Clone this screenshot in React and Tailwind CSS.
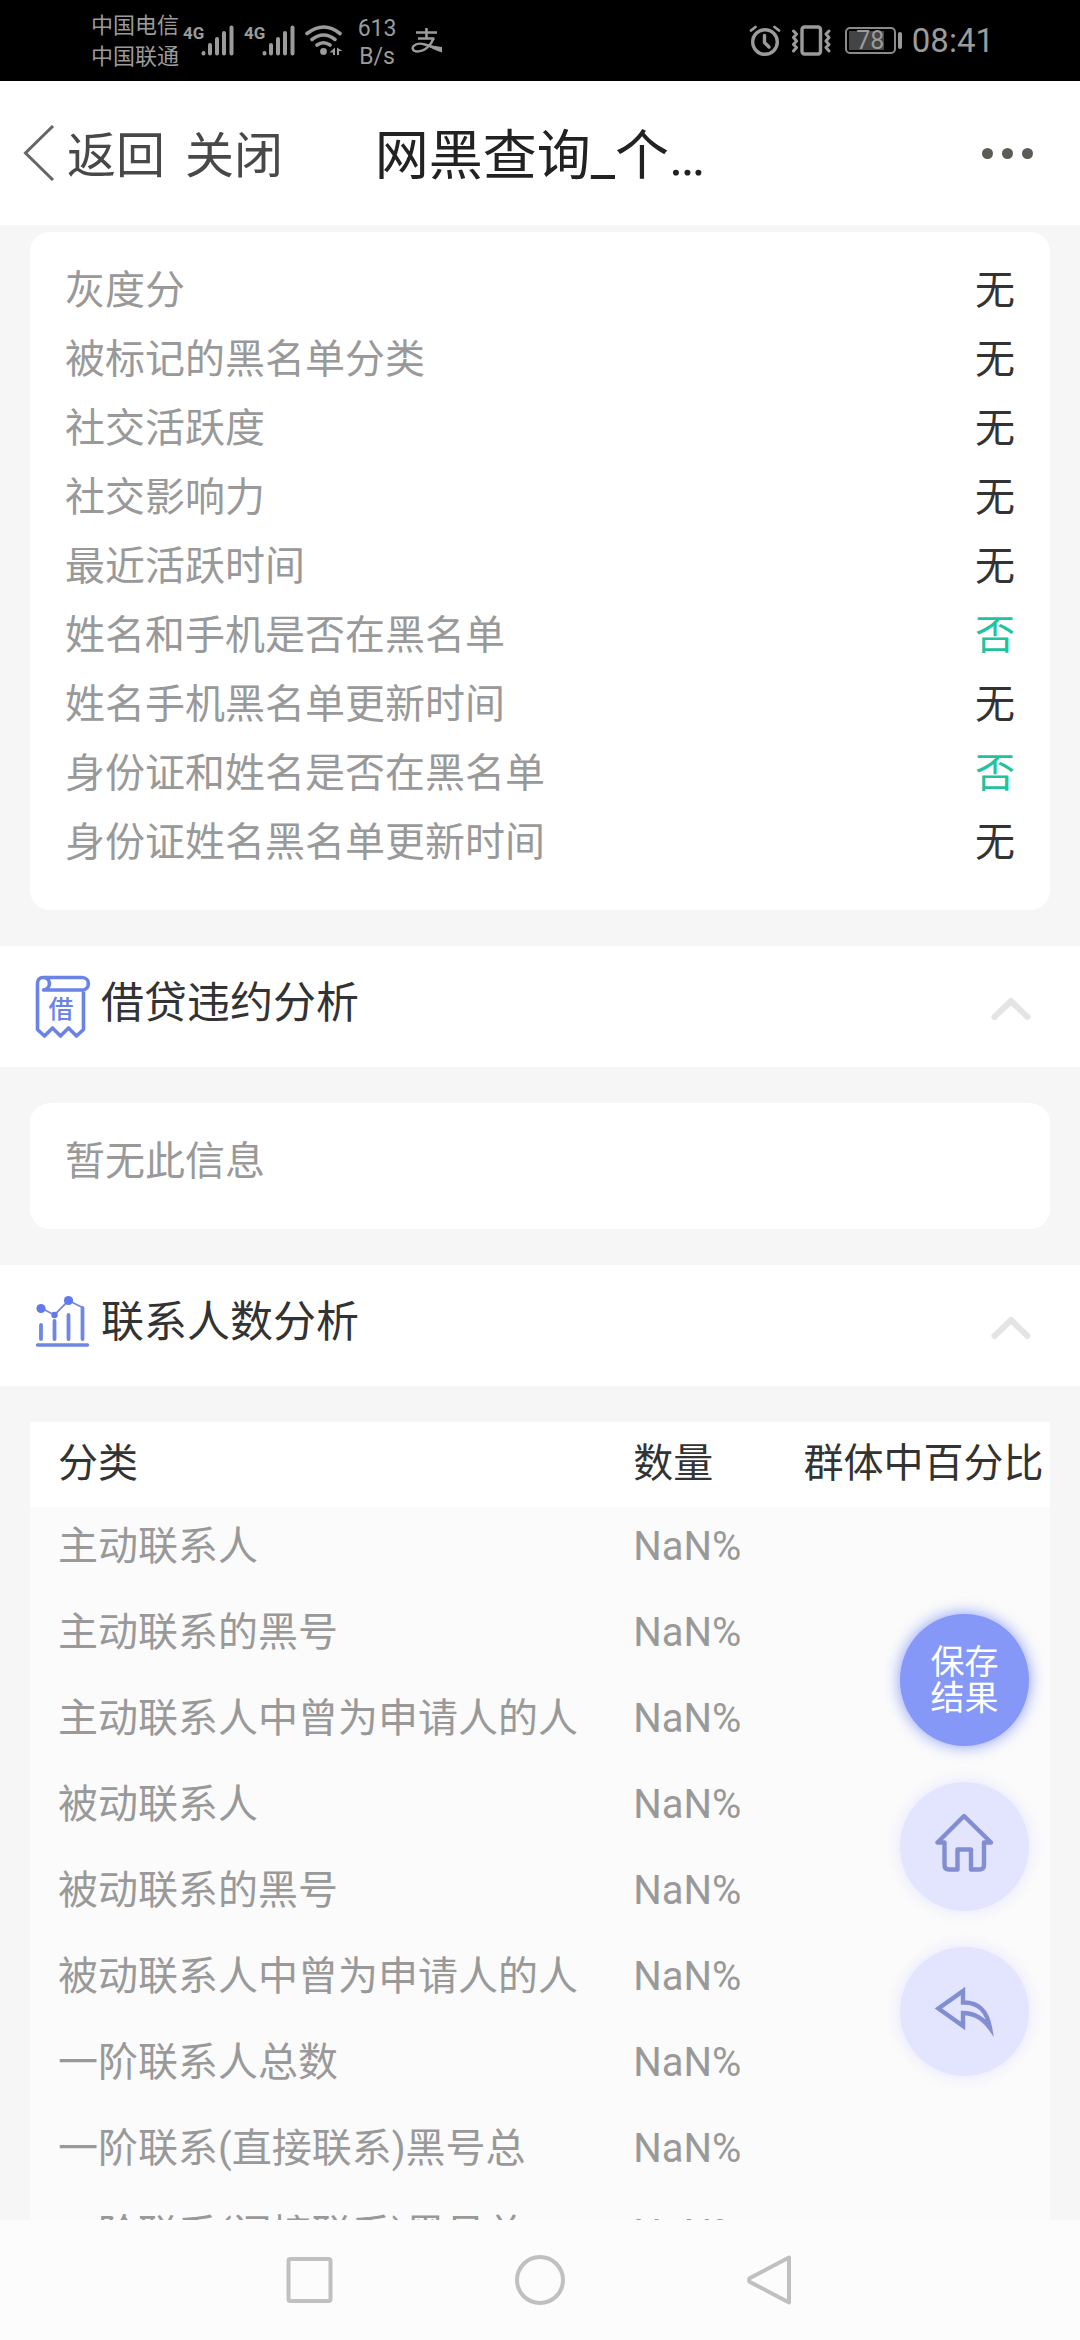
import React, { useState } from 'react';

const profileRows = [
  { label: '灰度分', value: '无' },
  { label: '被标记的黑名单分类', value: '无' },
  { label: '社交活跃度', value: '无' },
  { label: '社交影响力', value: '无' },
  { label: '最近活跃时间', value: '无' },
  { label: '姓名和手机是否在黑名单', value: '否', safe: true },
  { label: '姓名手机黑名单更新时间', value: '无' },
  { label: '身份证和姓名是否在黑名单', value: '否', safe: true },
  { label: '身份证姓名黑名单更新时间', value: '无' },
];

const contactRows = [
  '主动联系人',
  '主动联系的黑号',
  '主动联系人中曾为申请人的人',
  '被动联系人',
  '被动联系的黑号',
  '被动联系人中曾为申请人的人',
  '一阶联系人总数',
  '一阶联系(直接联系)黑号总',
  '一阶联系(间接联系)黑号总',
];

const Signal = () => (
  <div className="flex items-start">
    <span className="w-[18px] text-[17px] leading-[16px] font-bold">4G</span>
    <svg width="33" height="31" viewBox="0 0 33 31" fill="none" stroke="currentColor" strokeWidth="4" strokeLinecap="round">
      <path d="M2.5 28V28.5M9 20V28.5M16 14V28.5M23 8V28.5M30.5 2.5V28.5" />
    </svg>
  </div>
);

const WifiIcon = () => (
  <svg width="38" height="31" viewBox="0 0 38 31" fill="none" stroke="currentColor" strokeWidth="3.6" strokeLinecap="round">
    <path d="M2 8.5Q19-4.5 35 8.5M7 14.5Q18.5 5.5 30 14.5M12 20Q18.5 15.5 25 20" />
    <circle cx="18.5" cy="26.5" r="3.4" fill="currentColor" stroke="none" />
    <path d="M30 22.5V30H28V27.5H24.5ZM32 30V22.5L37.5 26H34V30Z" fill="currentColor" stroke="none" />
  </svg>
);

const AlipayIcon = () => (
  <svg width="32" height="25" viewBox="0 0 32 25" fill="none" stroke="currentColor">
    <path d="M5 4.5H26M15.5 0V10M7 10.5H23.5" strokeWidth="2.6" />
    <path d="M22.5 10.5C20 17 14 23.5 6.5 23.5C1.5 23.5 .8 20 2.8 17.800C5 15.500 9 15 14 16.500C20 18.300 25 20.500 31 21.500" strokeWidth="2.4" />
    <path d="M17 17L31 19V24.5C26 23 21 20.5 17 18.5Z" fill="currentColor" stroke="none" />
  </svg>
);

const AlarmIcon = () => (
  <svg width="32" height="31" viewBox="0 0 32 31" fill="none" stroke="currentColor" strokeWidth="3.4" strokeLinecap="round">
    <circle cx="16" cy="17" r="12.3" />
    <path d="M15.5 10.5V17.5L20 22" />
    <path d="M2 5.5L6.5 2M30 5.5L25.500 2" strokeWidth="2.8" />
  </svg>
);

const VibrateIcon = () => (
  <svg width="40" height="31" viewBox="0 0 40 31" fill="none" stroke="currentColor" strokeLinecap="round" strokeLinejoin="round">
    <rect x="11" y="2" width="18.5" height="27" rx="2.5" strokeWidth="3.4" />
    <path d="M2.5 6L5.5 9L2.5 12.5L5.5 16L2.5 19.5L5.5 22.5L2.5 26M38 6L35 9L38 12.5L35 16L38 19.5L35 22.5L38 26" strokeWidth="3" />
  </svg>
);

const StatusBar = () => (
  <div className="flex h-[81px] shrink-0 items-center justify-between bg-black pr-[86px] pl-[91px] text-[#9b9b9b]">
    <div className="flex items-center">
      <div className="mr-1 text-[22px] leading-[31px]">
        <p>中国电信</p>
        <p>中国联通</p>
      </div>
      <div className="flex gap-[10px]">
        <Signal />
        <Signal />
        <WifiIcon />
      </div>
      <div className="mx-3 w-11 pt-1 text-center text-[23px] leading-[28px]">
        <p>613</p>
        <p>B/s</p>
      </div>
      <AlipayIcon />
    </div>
    <div className="flex items-center gap-[10px]">
      <AlarmIcon />
      <VibrateIcon />
      <div className="ml-1 flex items-center gap-[2px]">
        <div className="relative flex h-[27px] w-[51px] items-center justify-center rounded-[5px] border-2 border-[#8a8a8a]">
          <div className="absolute inset-y-[2px] left-[2px] w-[35px] bg-[#444]" />
          <span className="relative text-[25px] leading-[26px]">78</span>
        </div>
        <div className="h-[17px] w-1 rounded-sm bg-current" />
      </div>
      <span className="text-[33px] leading-[40px]">08:41</span>
    </div>
  </div>
);

const NavBar = () => (
  <header className="grid h-36 shrink-0 grid-cols-[1fr_auto_1fr] items-center bg-white px-[23px]">
    <div className="flex items-center text-[49px] leading-[60px] text-[#484848]">
      <button type="button" className="flex items-center gap-3">
        <svg width="32" height="56" viewBox="0 0 32 56" fill="none" stroke="#666" strokeWidth="3">
          <path d="M30 1L2.5 28L30 55" />
        </svg>
        <span className="pt-2">返回</span>
      </button>
      <button type="button" className="ml-5 pt-2">关闭</button>
    </div>
    <h1 className="pt-2 text-[54px] leading-[64px] text-[#222]">网黑查询_个…</h1>
    <button type="button" aria-label="更多" className="mr-6 flex gap-[9px] justify-self-end">
      <span className="size-[11px] rounded-full bg-[#5c5c56]" />
      <span className="size-[11px] rounded-full bg-[#5c5c56]" />
      <span className="size-[11px] rounded-full bg-[#5c5c56]" />
    </button>
  </header>
);

const LoanIcon = () => (
  <svg width="56" height="64" viewBox="0 0 56 64" fill="none" stroke="#6b83e6" strokeWidth="3.6" strokeLinejoin="round">
    <path d="M8 2.5H47C55.5 2.5 55.5 15 47 15H8.5C17 13.5 16 2.5 8 2.5C4.5 2.5 2.5 5 2.5 8.5V54.5L9.5 61L17.5 53L25.5 61L33.5 53L41.5 61L48.5 54.5V15" />
    <text x="26" y="43" textAnchor="middle" fontSize="25" fill="#6b83e6" stroke="none" className="font-medium">借</text>
  </svg>
);

const ContactIcon = () => (
  <svg width="56" height="54" viewBox="0 0 56 54" fill="none" stroke="#6f86e4" strokeLinecap="round">
    <path d="M6 31V45M19.5 27V45M33.5 21V45M47.5 14V45" strokeWidth="3.800" />
    <path d="M2.5 51H52.5" strokeWidth="3.4" />
    <path d="M6 14L19.5 21L33.5 6.5L47.5 13.5" strokeWidth="1.8" />
    <g fill="#6279ee" stroke="none">
      <circle cx="6" cy="14.5" r="4.6" />
      <circle cx="19.5" cy="21" r="3.2" />
      <circle cx="33.5" cy="6.5" r="4.6" />
    </g>
  </svg>
);

const Section = ({ icon, title, children }) => {
  const [open, setOpen] = useState(true);

  return (
    <section className="mt-9">
      <h2>
        <button
          type="button"
          aria-expanded={open}
          onClick={() => setOpen(!open)}
          className="flex h-[121px] w-full items-start bg-white pt-[27px] pr-12 pl-[35px] text-left"
        >
          <span className="w-[66px] pt-[2px]">{icon}</span>
          <span className="flex-1 text-[43px] leading-[60px] text-[#333]">{title}</span>
          <svg width="42" height="26" viewBox="0 0 42 26" className={open ? 'mt-6' : 'mt-6 rotate-180'} fill="none" stroke="#e5e3e4" strokeWidth="6" strokeLinecap="round" strokeLinejoin="round">
            <path d="M4.5 20L21 4L37.5 20" />
          </svg>
        </button>
      </h2>
      {open && <div className="mx-[30px] mt-9">{children}</div>}
    </section>
  );
};

const ContactTable = () => (
  <table className="w-full table-fixed text-left text-[40px] leading-[60px] whitespace-nowrap">
    <thead className="bg-white text-[#333]">
      <tr>
        <th scope="col" className="w-[56.4%] pt-3 pb-[13px] pl-7 font-normal">分类</th>
        <th scope="col" className="w-[16.7%] pt-3 pb-[13px] pl-7 font-normal">数量</th>
        <th scope="col" className="pt-3 pb-[13px] pl-7 font-normal">群体中百分比</th>
      </tr>
    </thead>
    <tbody className="bg-[#fbfbfb] text-[#999]">
      {contactRows.map((name) => (
        <tr key={name}>
          <td className="pt-[10px] pb-4 pl-7">{name}</td>
          <td className="pt-[10px] pb-4 pl-7">NaN%</td>
          <td />
        </tr>
      ))}
    </tbody>
  </table>
);

const FloatingActions = () => (
  <div className="absolute right-[51px] bottom-36 flex flex-col gap-9">
    <button type="button" className="flex h-[132px] w-[129px] flex-col items-center justify-center rounded-[50%] bg-[#8598f8] text-[34px] leading-[36px] text-white shadow-[0_0_16px_#8598f8]">
      <span>保存</span>
      <span>结果</span>
    </button>
    <button type="button" aria-label="首页" className="flex size-[129px] items-center justify-center rounded-full bg-[#e3e4fe] pb-2 shadow-[0_0_16px_#e3e4fe]">
      <svg width="60" height="60" viewBox="0 0 60 60" fill="none" stroke="#818ed0" strokeWidth="4.4" strokeLinecap="round" strokeLinejoin="round">
        <path d="M29 3L2.500 29.500H9.500V52Q9.500 56.500 14 56.500H22.500V36.500H36V56.500H44Q49 56.500 49 52V29.500H56Z" />
      </svg>
    </button>
    <button type="button" aria-label="返回上一页" className="flex size-[129px] items-center justify-center rounded-full bg-[#e3e4fe] shadow-[0_0_16px_#e3e4fe]">
      <svg width="60" height="50" viewBox="0 0 60 50" fill="none" stroke="#818ed0" strokeWidth="4.4" strokeMiterlimit="10">
        <path d="M28 4V15.500C44 15 52 24 55 41C47 30 38 26 28 26V39L3.500 21.500Z" />
      </svg>
    </button>
  </div>
);

const SystemNav = () => (
  <nav className="flex h-[120px] shrink-0 justify-center bg-[#fcfcfc]">
    <div className="grid w-[64%] grid-cols-3 place-items-center">
      <button type="button" aria-label="最近任务">
        <svg width="50" height="52" viewBox="0 0 50 52" fill="none" stroke="#c0c0c0" strokeWidth="4">
          <rect x="3.5" y="5" width="42" height="42" rx="2" />
        </svg>
      </button>
      <button type="button" aria-label="主屏幕">
        <svg width="52" height="52" viewBox="0 0 52 52" fill="none" stroke="#c0c0c0" strokeWidth="4">
          <circle cx="26" cy="26" r="23" />
        </svg>
      </button>
      <button type="button" aria-label="后退">
        <svg width="46" height="52" viewBox="0 0 46 52" fill="none" stroke="#c0c0c0" strokeWidth="4" strokeLinejoin="round">
          <path d="M42 3.5V48.5L3 28Q1 26 3 24Z" />
        </svg>
      </button>
    </div>
  </nav>
);

const App = () => (
  <div className="flex h-screen flex-col overflow-hidden bg-[#f6f6f6] font-[Roboto,'Noto_Sans_CJK_SC',sans-serif]">
    <StatusBar />
    <NavBar />
    <div className="relative min-h-0 flex-1">
      <main className="h-full overflow-hidden pt-[7px]">
        <dl className="mx-[30px] rounded-[20px] bg-white px-[35px] pt-6 pb-[33px] text-[40px] leading-[69px]">
          {profileRows.map((row) => (
            <div key={row.label} className="flex justify-between">
              <dt className="text-[#999]">{row.label}</dt>
              <dd className={row.safe ? 'text-[#1fc39f]' : 'text-[#333]'}>{row.value}</dd>
            </div>
          ))}
        </dl>
        <Section icon={<LoanIcon />} title="借贷违约分析">
          <p className="rounded-[20px] bg-white px-[35px] pt-6 pb-[33px] text-[40px] leading-[69px] text-[#999]">暂无此信息</p>
        </Section>
        <Section icon={<ContactIcon />} title="联系人数分析">
          <ContactTable />
        </Section>
      </main>
      <FloatingActions />
    </div>
    <SystemNav />
  </div>
);

export default App;
